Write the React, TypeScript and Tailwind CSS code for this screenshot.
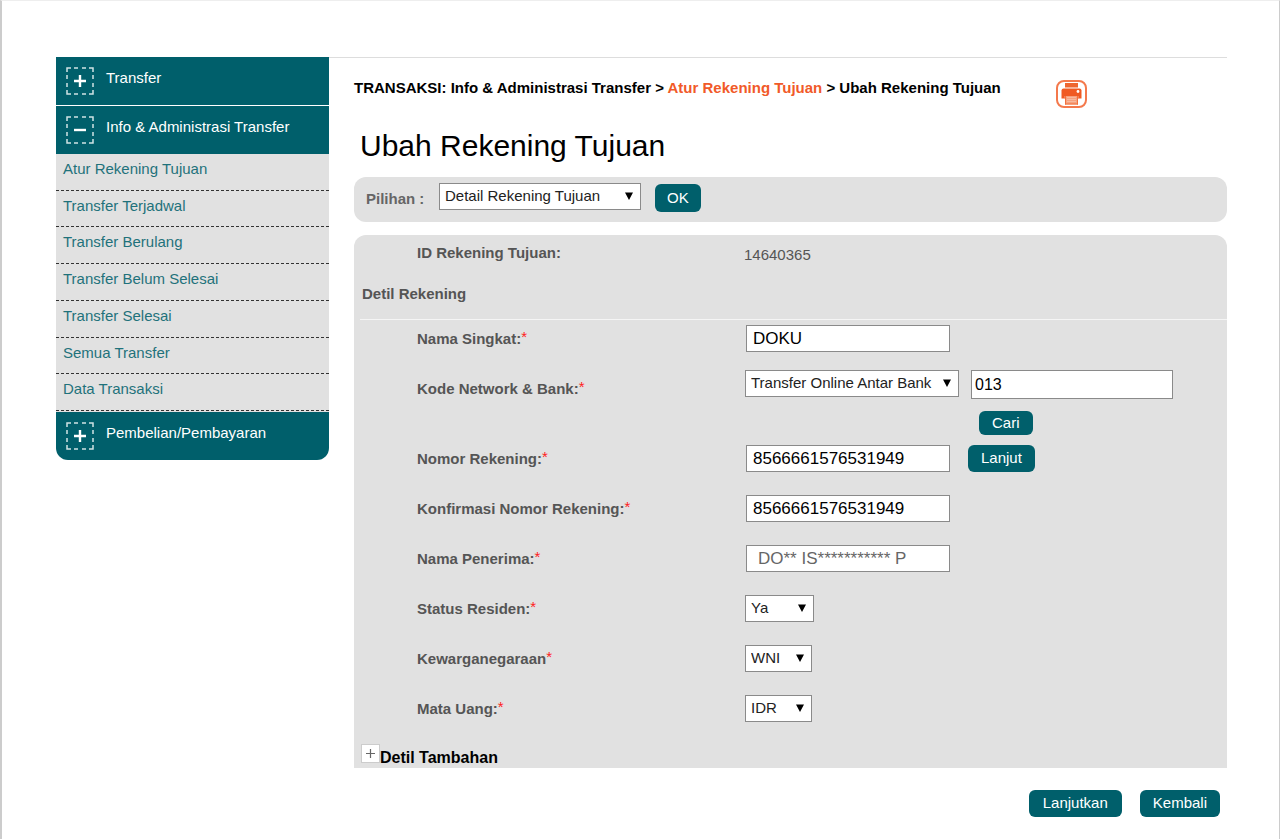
import { useState } from "react"

const subMenu = [
    "Atur Rekening Tujuan",
    "Transfer Terjadwal",
    "Transfer Berulang",
    "Transfer Belum Selesai",
    "Transfer Selesai",
    "Semua Transfer",
    "Data Transaksi",
]

const fieldStyle = "ml-px h-[27px] w-[204px] border border-[#8a8a8a] bg-white px-[6px] text-[17px] text-black outline-none"

function BoxIcon (props: any) {
    return (
        <svg width="28" height="28" viewBox="0 0 28 28" fill="none" className="shrink-0">
            <path d="M1 5V1H5M8 1H12M16 1H20M23 1H27V5M27 8V12M27 16V20M27 23V27H23M20 27H16M12 27H8M5 27H1V23M1 20V16M1 12V8" stroke="#cfe3e5" strokeWidth="1.5" />
            <path d={props.open ? "M8 14H20" : "M8 14H20M14 8V20"} stroke="#fff" strokeWidth="2.4" />
        </svg>
    )
}

function PrintIcon () {
    return (
        <svg width="31" height="30" viewBox="0 0 31 30">
            <rect x="1" y="2" width="29" height="26" rx="7" fill="#fff" stroke="#f4794c" strokeWidth="2" />
            <rect x="9" y="4" width="13" height="4.5" fill="#ee6630" />
            <path d="M7.5 9.5H23.5Q25.5 9.5 25.5 11.5V19.5H5.5V11.5Q5.5 9.5 7.5 9.5Z" fill="#f05a22" />
            <circle cx="22" cy="12.5" r="1.4" fill="#fff" />
            <path d="M8.5 17H22.5V19.5H22V25.5H9V19.5H8.5Z" fill="#f6a17e" />
            <path d="M9.5 17V25.5M21.5 17V25.5M9 25H22" stroke="#f2703d" strokeWidth="1" />
            <path d="M11 18.5H20M11 20.5H20M11 22.5H20" stroke="#f9bfa6" strokeWidth="0.8" />
        </svg>
    )
}

function MenuHeader (props: any) {
    return (
        <button className={"flex h-[48px] w-full items-start gap-[12px] bg-[#005f6b] pl-[10px] text-left text-[15px] leading-[18px] text-white " + props.className}>
            <span className="pt-[10px]"><BoxIcon open={props.open} /></span>
            <span className="pt-[12px]">{props.title}</span>
        </button>
    )
}

function SelectBox (props: any) {
    return (
        <div className={"relative " + props.width}>
            <select id={props.id} className="h-[27px] w-full appearance-none border border-[#8a8a8a] bg-white pl-[5px] pr-[20px] text-[15px] text-[#222] outline-none">
                <option>{props.value}</option>
            </select>
            <svg width="8" height="8" viewBox="0 0 8 8" className="pointer-events-none absolute right-[8px] top-[9px]">
                <path d="M0 0.5H8L4 8Z" fill="#000" />
            </svg>
        </div>
    )
}

function Button (props: any) {
    return (
        <button className={"rounded-md bg-[#005f6b] text-[15px] text-white hover:bg-[#00798a] " + (props.className || "h-[27px] px-[13px]")}>
            {props.children}
        </button>
    )
}

function Row (props: any) {
    return (
        <div className={"grid grid-cols-[391px_1fr] items-start " + (props.className || "h-[50px]")}>
            <label htmlFor={props.id} className={"pl-[63px] text-[15px] leading-[18px] font-bold text-[#555] " + (props.labelStyle || "pt-[4px]")}>
                {props.label}<span className="align-[2px] leading-none font-normal text-[#ff2020]">*</span>
            </label>
            <div className="flex items-start">{props.children}</div>
        </div>
    )
}

export default function App () {
    const [form, setForm] = useState({
        name: "DOKU",
        bank: "013",
        account: "8566661576531949",
        confirm: "8566661576531949",
    })

    const handleChange = (e: any) => {
        setForm({ ...form, [e.target.name]: e.target.value })
    }

    return (
        <div className="min-h-screen border-t border-r border-l-2 border-t-[#eee] border-r-[#ccc] border-l-[#ccc] bg-white pt-[56px] pr-[52px] pl-[54px] font-['Liberation_Sans',Arial,sans-serif]">
            <div className="flex items-start">
                <nav className="w-[273px] shrink-0">
                    <MenuHeader title="Transfer" />
                    <MenuHeader title="Info & Administrasi Transfer" open className="mt-px" />
                    <ul className="flex h-[258px] flex-col bg-[#e1e1e1] pb-px">
                        {subMenu.map((item) => (
                            <li key={item} className="grow border-b border-dashed border-[#333] pt-[5px] pl-[7px]">
                                <a href="#" className="block text-[15px] leading-[20px] text-[#1f727b]">{item}</a>
                            </li>
                        ))}
                    </ul>
                    <MenuHeader title="Pembelian/Pembayaran" className="rounded-b-xl" />
                </nav>

                <main className="min-w-0 grow border-t border-[#ddd] pl-[25px]">
                    <div className="flex items-start justify-between pt-[21px] pr-[140px]">
                        <p className="text-[15px] leading-[18px] font-bold whitespace-nowrap text-black">
                            TRANSAKSI: Info &amp; Administrasi Transfer &gt; <a href="#" className="text-[#f15a29]">Atur Rekening Tujuan</a> &gt; Ubah Rekening Tujuan
                        </p>
                        <button aria-label="Cetak"><PrintIcon /></button>
                    </div>
                    <h1 className="mt-[19px] pl-[6px] text-[30px] leading-[36px] text-black">Ubah Rekening Tujuan</h1>

                    <div className="mt-[13px] flex h-[45px] items-start rounded-xl bg-[#e1e1e1] pt-[6px] pl-[12px]">
                        <label htmlFor="pilihan" className="w-[73px] pt-[7px] text-[15px] leading-[18px] font-bold text-[#666]">Pilihan :</label>
                        <SelectBox id="pilihan" value="Detail Rekening Tujuan" width="w-[202px]" />
                        <Button className="mt-px ml-[14px] h-[28px] px-[12px]">OK</Button>
                    </div>

                    <div className="mt-[13px] rounded-t-xl bg-[#e1e1e1]">
                        <div className="grid h-[50px] grid-cols-[390px_1fr] text-[15px] leading-[18px] text-[#555]">
                            <p className="pt-[9px] pl-[63px] font-bold">ID Rekening Tujuan:</p>
                            <p className="pt-[11px]">14640365</p>
                        </div>
                        <h2 className="pl-[8px] text-[15px] leading-[18px] font-bold text-[#555]">Detil Rekening</h2>
                        <hr className="mt-[16px] mb-[5px] ml-[6px] border-[#f5f5f5]" />

                        <Row id="name" label="Nama Singkat:" className="h-[45px]">
                            <input id="name" name="name" value={form.name} onChange={handleChange} className={fieldStyle} />
                        </Row>
                        <Row id="network" label="Kode Network & Bank:" className="h-[75px]" labelStyle="pt-[9px]">
                            <SelectBox id="network" value="Transfer Online Antar Bank" width="w-[214px]" />
                            <div className="ml-[12px]">
                                <input name="bank" aria-label="Kode Bank" value={form.bank} onChange={handleChange} className="block h-[29px] w-[202px] border border-[#8a8a8a] bg-white px-[3px] text-[16px] text-black outline-none" />
                                <Button className="mt-[12px] ml-[8px] h-[24px] px-[13px]">Cari</Button>
                            </div>
                        </Row>
                        <Row id="account" label="Nomor Rekening:">
                            <input id="account" name="account" value={form.account} onChange={handleChange} className={fieldStyle} />
                            <div className="ml-[18px]"><Button>Lanjut</Button></div>
                        </Row>
                        <Row id="confirm" label="Konfirmasi Nomor Rekening:">
                            <input id="confirm" name="confirm" value={form.confirm} onChange={handleChange} className={fieldStyle} />
                        </Row>
                        <Row id="receiver" label="Nama Penerima:">
                            <input id="receiver" readOnly value="DO** IS*********** P" className="ml-px h-[27px] w-[204px] border border-[#8a8a8a] bg-white px-[11px] text-[17px] text-[#666] outline-none" />
                        </Row>
                        <Row id="resident" label="Status Residen:">
                            <SelectBox id="resident" value="Ya" width="w-[69px]" />
                        </Row>
                        <Row id="citizen" label="Kewarganegaraan">
                            <SelectBox id="citizen" value="WNI" width="w-[67px]" />
                        </Row>
                        <Row id="currency" label="Mata Uang:" className="h-[49px]">
                            <SelectBox id="currency" value="IDR" width="w-[67px]" />
                        </Row>

                        <div className="flex h-[24px] pl-[7px]">
                            <button aria-label="Buka Detil Tambahan" className="flex size-[19px] items-center justify-center border border-[#ccc] bg-white">
                                <svg width="9" height="9" viewBox="0 0 9 9">
                                    <path d="M4.5 0V9M0 4.5H9" stroke="#666" strokeWidth="1.2" />
                                </svg>
                            </button>
                            <h2 className="pt-[5px] text-[16px] leading-[18px] font-bold text-black">Detil Tambahan</h2>
                        </div>
                    </div>

                    <div className="mt-[22px] flex justify-end gap-[18px] pr-[7px]">
                        <Button className="h-[27px] px-[14px]">Lanjutkan</Button>
                        <Button>Kembali</Button>
                    </div>
                </main>
            </div>
        </div>
    )
}
